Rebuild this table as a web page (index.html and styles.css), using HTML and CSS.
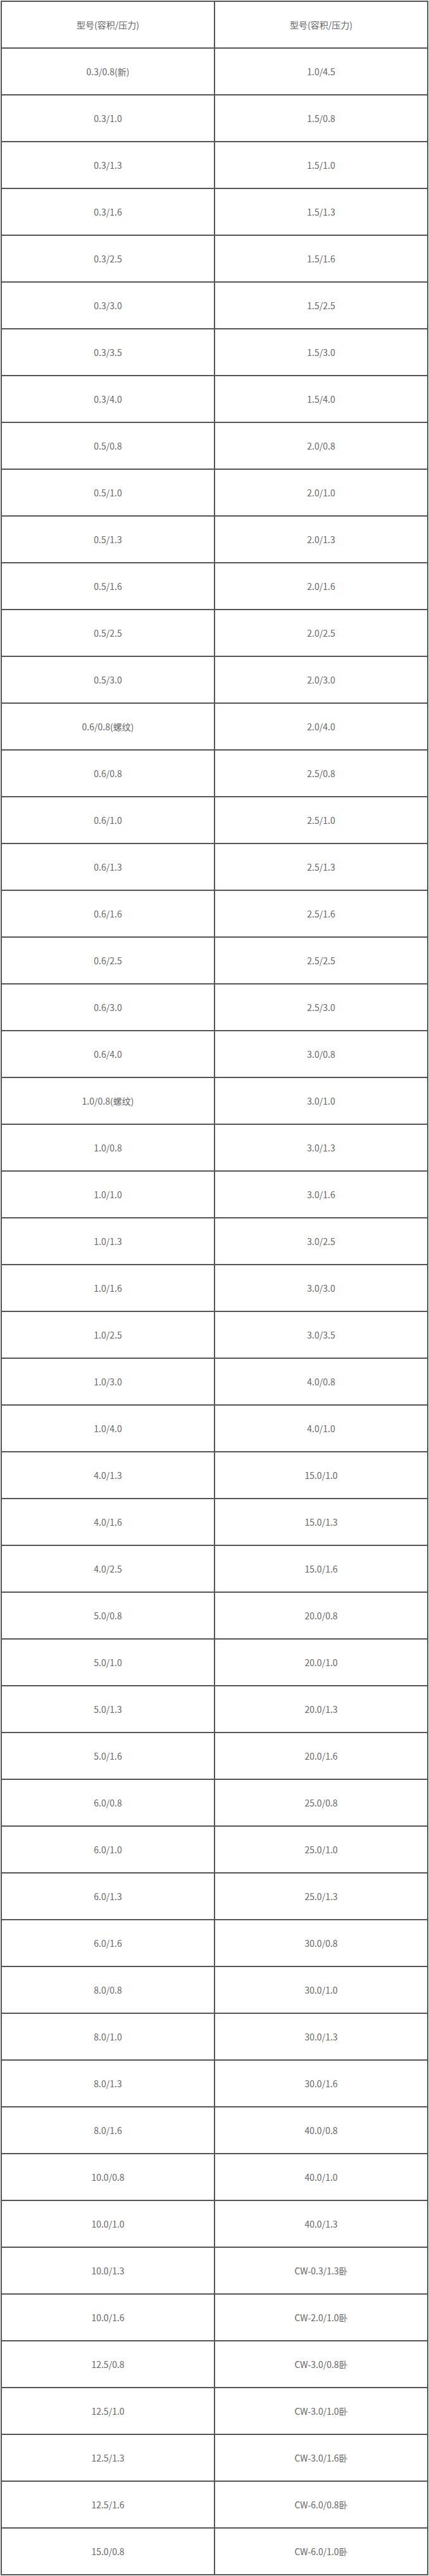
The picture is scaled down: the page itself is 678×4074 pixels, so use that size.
FILE: index.html
```html
<!DOCTYPE html>
<html lang="zh-CN">
<head>
<meta charset="utf-8">
<title>型号(容积/压力)</title>
<link rel="stylesheet" href="styles.css">
</head>
<body>
<table class="spec">
<tbody>
<tr><td>型号(容积/压力)</td><td>型号(容积/压力)</td></tr>
<tr><td>0.3/0.8(新)</td><td>1.0/4.5</td></tr>
<tr><td>0.3/1.0</td><td>1.5/0.8</td></tr>
<tr><td>0.3/1.3</td><td>1.5/1.0</td></tr>
<tr><td>0.3/1.6</td><td>1.5/1.3</td></tr>
<tr><td>0.3/2.5</td><td>1.5/1.6</td></tr>
<tr><td>0.3/3.0</td><td>1.5/2.5</td></tr>
<tr><td>0.3/3.5</td><td>1.5/3.0</td></tr>
<tr><td>0.3/4.0</td><td>1.5/4.0</td></tr>
<tr><td>0.5/0.8</td><td>2.0/0.8</td></tr>
<tr><td>0.5/1.0</td><td>2.0/1.0</td></tr>
<tr><td>0.5/1.3</td><td>2.0/1.3</td></tr>
<tr><td>0.5/1.6</td><td>2.0/1.6</td></tr>
<tr><td>0.5/2.5</td><td>2.0/2.5</td></tr>
<tr><td>0.5/3.0</td><td>2.0/3.0</td></tr>
<tr><td>0.6/0.8(螺纹)</td><td>2.0/4.0</td></tr>
<tr><td>0.6/0.8</td><td>2.5/0.8</td></tr>
<tr><td>0.6/1.0</td><td>2.5/1.0</td></tr>
<tr><td>0.6/1.3</td><td>2.5/1.3</td></tr>
<tr><td>0.6/1.6</td><td>2.5/1.6</td></tr>
<tr><td>0.6/2.5</td><td>2.5/2.5</td></tr>
<tr><td>0.6/3.0</td><td>2.5/3.0</td></tr>
<tr><td>0.6/4.0</td><td>3.0/0.8</td></tr>
<tr><td>1.0/0.8(螺纹)</td><td>3.0/1.0</td></tr>
<tr><td>1.0/0.8</td><td>3.0/1.3</td></tr>
<tr><td>1.0/1.0</td><td>3.0/1.6</td></tr>
<tr><td>1.0/1.3</td><td>3.0/2.5</td></tr>
<tr><td>1.0/1.6</td><td>3.0/3.0</td></tr>
<tr><td>1.0/2.5</td><td>3.0/3.5</td></tr>
<tr><td>1.0/3.0</td><td>4.0/0.8</td></tr>
<tr><td>1.0/4.0</td><td>4.0/1.0</td></tr>
<tr><td>4.0/1.3</td><td>15.0/1.0</td></tr>
<tr><td>4.0/1.6</td><td>15.0/1.3</td></tr>
<tr><td>4.0/2.5</td><td>15.0/1.6</td></tr>
<tr><td>5.0/0.8</td><td>20.0/0.8</td></tr>
<tr><td>5.0/1.0</td><td>20.0/1.0</td></tr>
<tr><td>5.0/1.3</td><td>20.0/1.3</td></tr>
<tr><td>5.0/1.6</td><td>20.0/1.6</td></tr>
<tr><td>6.0/0.8</td><td>25.0/0.8</td></tr>
<tr><td>6.0/1.0</td><td>25.0/1.0</td></tr>
<tr><td>6.0/1.3</td><td>25.0/1.3</td></tr>
<tr><td>6.0/1.6</td><td>30.0/0.8</td></tr>
<tr><td>8.0/0.8</td><td>30.0/1.0</td></tr>
<tr><td>8.0/1.0</td><td>30.0/1.3</td></tr>
<tr><td>8.0/1.3</td><td>30.0/1.6</td></tr>
<tr><td>8.0/1.6</td><td>40.0/0.8</td></tr>
<tr><td>10.0/0.8</td><td>40.0/1.0</td></tr>
<tr><td>10.0/1.0</td><td>40.0/1.3</td></tr>
<tr><td>10.0/1.3</td><td>CW-0.3/1.3卧</td></tr>
<tr><td>10.0/1.6</td><td>CW-2.0/1.0卧</td></tr>
<tr><td>12.5/0.8</td><td>CW-3.0/0.8卧</td></tr>
<tr><td>12.5/1.0</td><td>CW-3.0/1.0卧</td></tr>
<tr><td>12.5/1.3</td><td>CW-3.0/1.6卧</td></tr>
<tr><td>12.5/1.6</td><td>CW-6.0/0.8卧</td></tr>
<tr><td>15.0/0.8</td><td>CW-6.0/1.0卧</td></tr>
</tbody>
</table>
</body>
</html>
```

FILE: styles.css
```css
html, body {
  margin: 0;
  padding: 0;
  background: #ffffff;
}

body {
  padding: 1px;
  font-family: "Noto Sans CJK SC", "Noto Sans", sans-serif;
  font-size: 14px;
  color: #666666;
}

.spec {
  width: 676px;
  border: 1px solid #555555;
  border-collapse: separate;
  border-spacing: 0;
  table-layout: fixed;
}

.spec td {
  width: 50%;
  height: 72px;
  padding: 0;
  border: 1px solid #555555;
  text-align: center;
  vertical-align: middle;
  line-height: 20px;
  box-sizing: content-box;
}
```
